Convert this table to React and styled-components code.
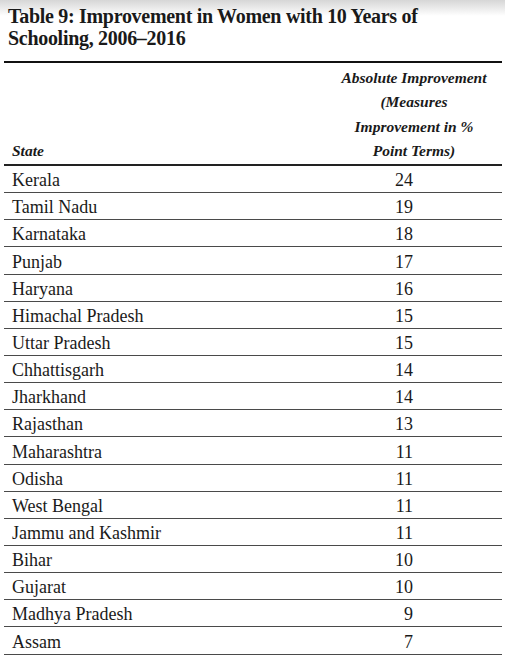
import React from "react";
import styled, { createGlobalStyle } from "styled-components";

const serif = `"Liberation Serif", "Times New Roman", serif`;

const Global = createGlobalStyle`
  html, body { margin: 0; padding: 0; }
  body {
    background: linear-gradient(#d6d6d6 0px, #ffffff 16px) no-repeat, #fff;
    font-family: ${serif};
    color: #1a1a1a;
  }
`;

const Page = styled.div`
  width: 505px;
  height: 657px;
  box-sizing: border-box;
  padding: 6px 3px 0 4px;
  overflow: hidden;
`;

const Title = styled.h2`
  margin: 0 0 0 4px;
  font-family: ${serif};
  font-size: 20px;
  line-height: 21.5px;
  font-weight: bold;
  letter-spacing: -0.3px;
`;

const Table = styled.table`
  margin-top: 12px;
  width: 498px;
  border-collapse: collapse;
  border-top: 2px solid #111;
  font-family: ${serif};
  color: #1a1a1a;
`;

const HeadCell = styled.th`
  font-family: ${serif};
  font-style: italic;
  font-weight: bold;
  font-size: 15.5px;
  line-height: 24.3px;
  vertical-align: bottom;
  padding: 3px 0 1px 0;
  border-bottom: 2px solid #222;
  text-align: ${(p) => (p.$num ? "center" : "left")};
  padding-left: ${(p) => (p.$num ? "0" : "8px")};
  width: ${(p) => (p.$num ? "176px" : "auto")};
`;

const Row = styled.tr`
  height: 27.15px;
`;

const Cell = styled.td`
  font-family: ${serif};
  font-size: 18px;
  line-height: 20px;
  padding: 4px 0 2px 0;
  border-bottom: 1.5px solid #4a4a4a;
  text-align: ${(p) => (p.$num ? "right" : "left")};
  padding-left: ${(p) => (p.$num ? "0" : "8px")};
  padding-right: ${(p) => (p.$num ? "89px" : "0")};
`;

const rows = [
  ["Kerala", 24],
  ["Tamil Nadu", 19],
  ["Karnataka", 18],
  ["Punjab", 17],
  ["Haryana", 16],
  ["Himachal Pradesh", 15],
  ["Uttar Pradesh", 15],
  ["Chhattisgarh", 14],
  ["Jharkhand", 14],
  ["Rajasthan", 13],
  ["Maharashtra", 11],
  ["Odisha", 11],
  ["West Bengal", 11],
  ["Jammu and Kashmir", 11],
  ["Bihar", 10],
  ["Gujarat", 10],
  ["Madhya Pradesh", 9],
  ["Assam", 7],
];

export default function App() {
  return (
    <Page>
      <Global />
      <Title>
        Table 9: Improvement in Women with 10 Years of
        <br />
        Schooling, 2006–2016
      </Title>
      <Table>
        <thead>
          <tr>
            <HeadCell>State</HeadCell>
            <HeadCell $num>
              Absolute Improvement
              <br />
              (Measures
              <br />
              Improvement in %
              <br />
              Point Terms)
            </HeadCell>
          </tr>
        </thead>
        <tbody>
          {rows.map(([s, v]) => (
            <Row key={s}>
              <Cell>{s}</Cell>
              <Cell $num>{v}</Cell>
            </Row>
          ))}
        </tbody>
      </Table>
    </Page>
  );
}
